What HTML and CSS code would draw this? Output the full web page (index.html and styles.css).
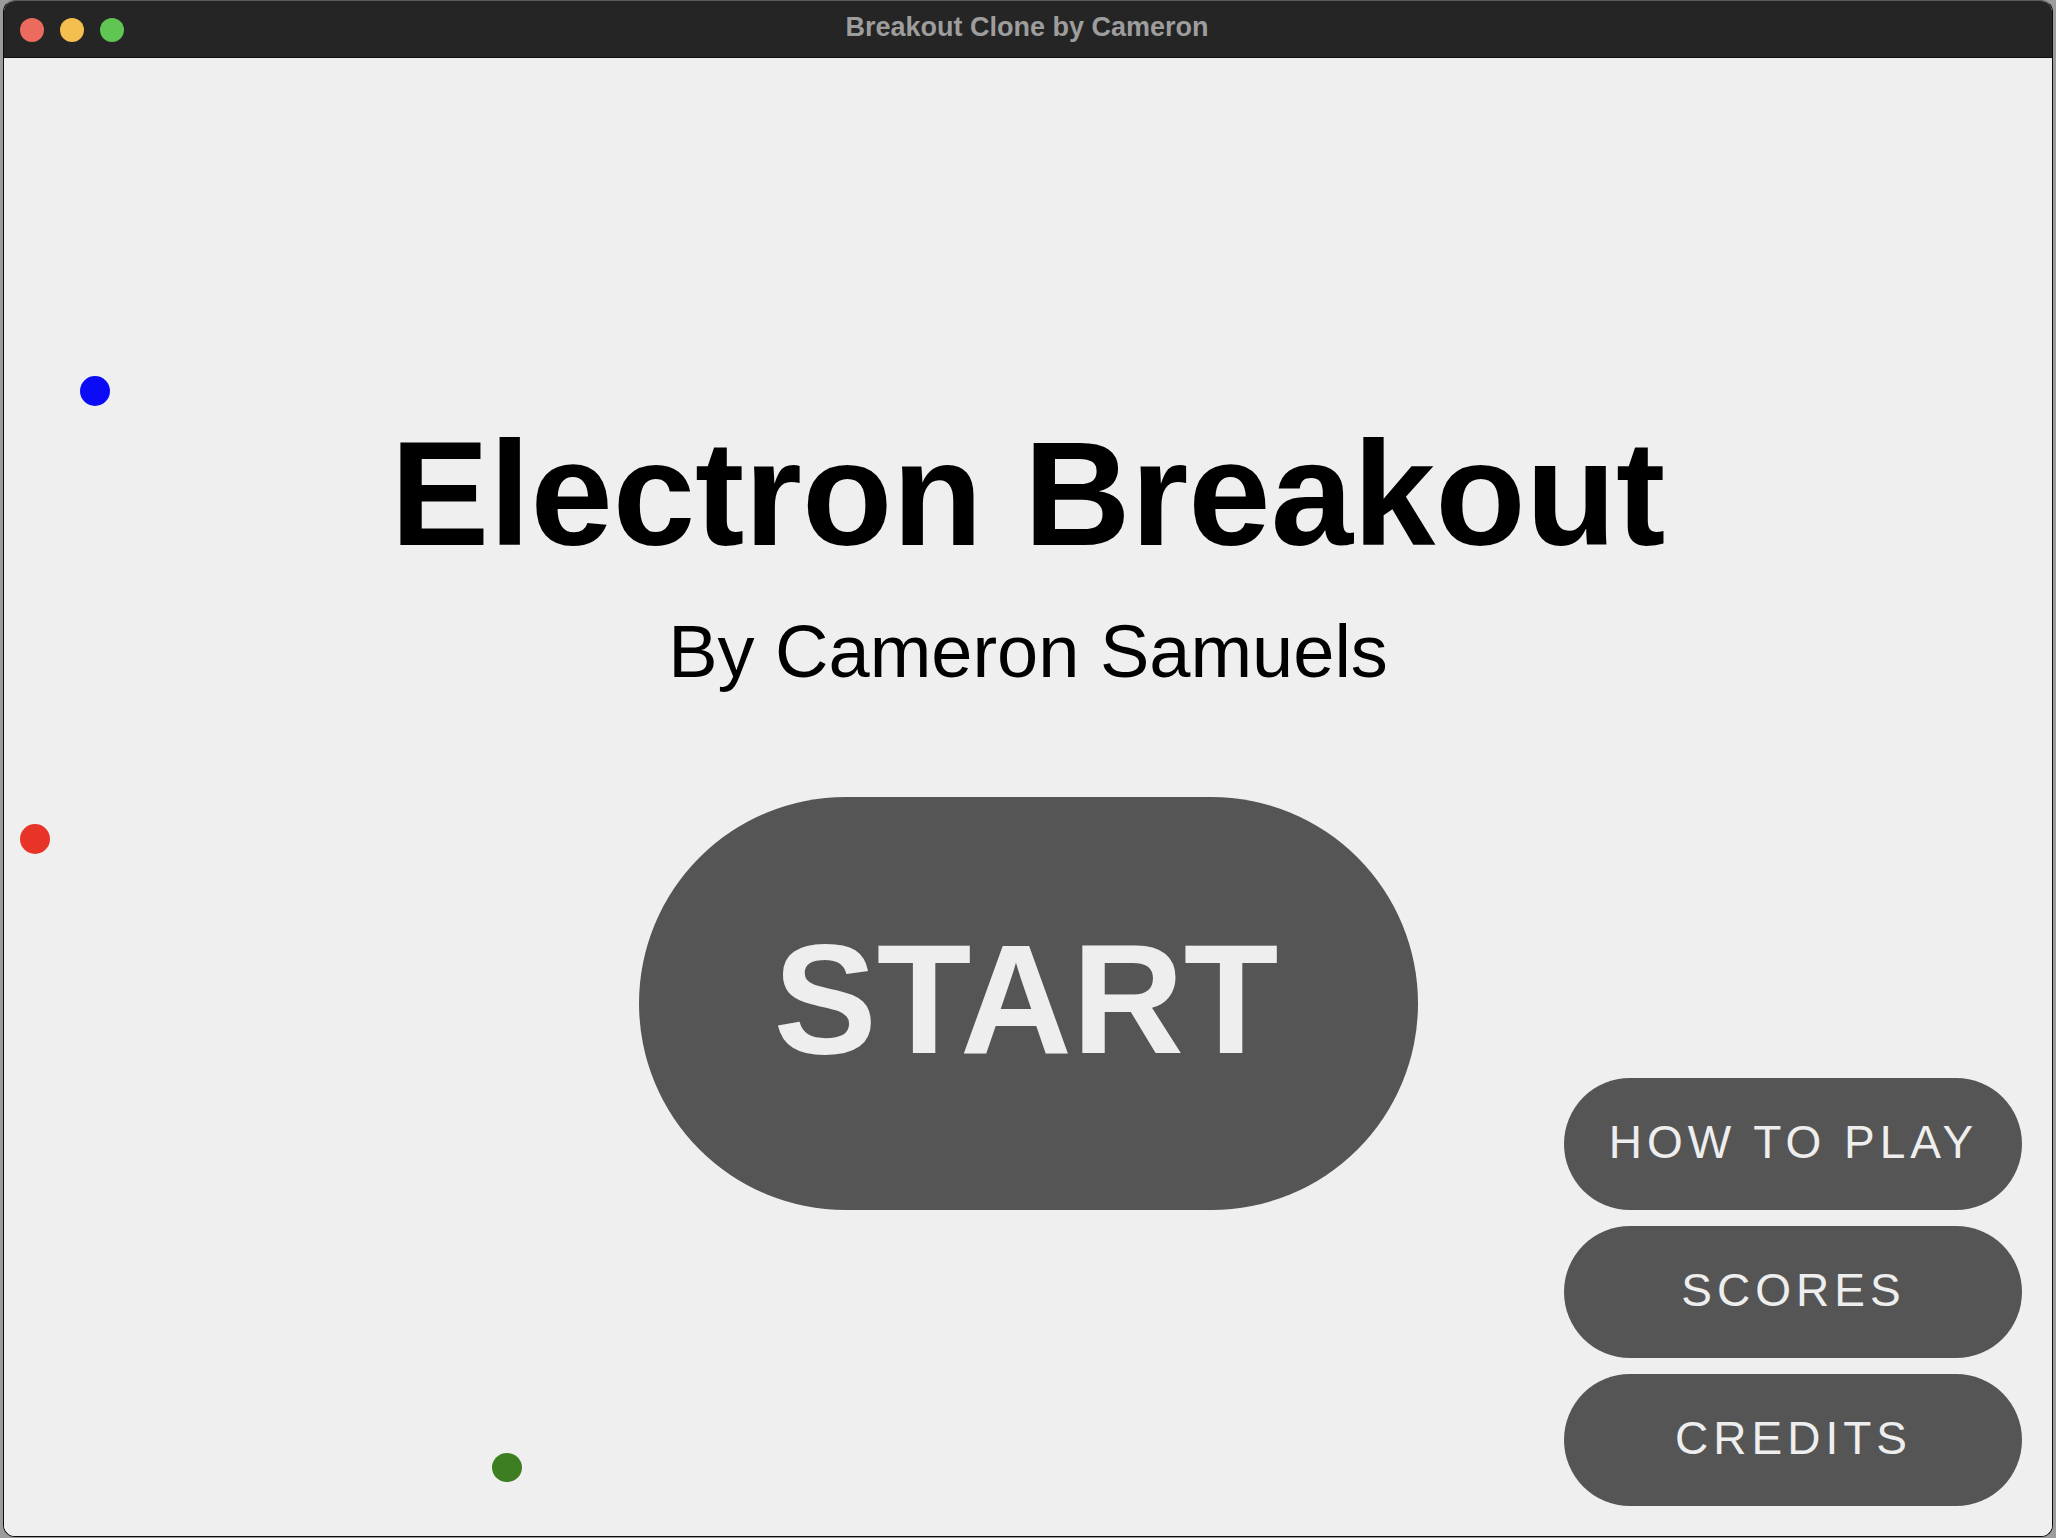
FILE: index.html
```html
<!DOCTYPE html>
<html lang="en">
<head>
<meta charset="utf-8">
<title>Breakout Clone by Cameron</title>
<link rel="stylesheet" href="styles.css">
</head>
<body>
<div class="window">
  <header class="titlebar">
    <div class="lights">
      <span class="light red"></span>
      <span class="light yellow"></span>
      <span class="light green"></span>
    </div>
    <div class="wintitle">Breakout Clone by Cameron</div>
  </header>
  <div class="stage">
    <div class="canvas">
      <span class="ball ball-blue"></span>
      <span class="ball ball-red"></span>
      <span class="ball ball-green"></span>
    </div>
    <main class="hero">
      <h1 class="title">Electron Breakout</h1>
      <p class="byline">By Cameron Samuels</p>
      <button class="start">START</button>
    </main>
    <nav class="menu">
      <button class="menu-btn">HOW TO PLAY</button>
      <button class="menu-btn">SCORES</button>
      <button class="menu-btn">CREDITS</button>
    </nav>
  </div>
</div>
</body>
</html>
```

FILE: styles.css
```css
html, body {
  margin: 0;
  padding: 0;
}
body {
  width: 2056px;
  height: 1538px;
  background: #9c9c9c;
  overflow: hidden;
  font-family: "Liberation Sans", Arial, sans-serif;
}
.window {
  margin-left: 3px;
  width: 2050px;
  height: 1537px;
  box-sizing: border-box;
  border: 1px solid #0c0c0c;
  border-top-color: #5a5a5a;
  border-radius: 12px;
  overflow: hidden;
  display: flex;
  flex-direction: column;
  background: #efefef;
}
.titlebar {
  height: 56px;
  flex: none;
  background: #252525;
  border-bottom: 1px solid #0e0e0e;
  display: grid;
  grid-template-columns: 1fr;
  align-items: center;
}
.lights {
  grid-area: 1 / 1;
  display: flex;
  gap: 16px;
  padding-left: 16px;
  align-items: center;
  margin-top: 1px;
}
.light {
  width: 24px;
  height: 24px;
  border-radius: 50%;
  display: block;
}
.red { background: #ec6a5e; }
.yellow { background: #f4bf4f; }
.green { background: #61c554; }
.wintitle {
  grid-area: 1 / 1;
  justify-self: center;
  color: #9d9d9d;
  font-weight: bold;
  font-size: 27px;
  margin-left: -2px;
  margin-top: -3px;
}
.stage {
  flex: 1;
  display: grid;
  grid-template-columns: 1fr;
  grid-template-rows: 1fr;
  position: relative;
  background: #efefef;
}
.canvas {
  grid-area: 1 / 1;
  position: relative;
}
.ball {
  position: absolute;
  width: 30px;
  height: 30px;
  border-radius: 50%;
}
.ball-blue { left: 76px; top: 318px; background: #0b0cf5; }
.ball-red { left: 16px; top: 766px; background: #e83428; }
.ball-green { left: 488px; top: 1395px; width: 30px; height: 29px; background: #3d7e22; }
.hero {
  grid-area: 1 / 1;
  display: flex;
  flex-direction: column;
  align-items: center;
  padding-top: 362px;
  z-index: 1;
}
.title {
  margin: 0;
  font-size: 148px;
  line-height: 148px;
  font-weight: bold;
  color: #000;
}
.byline {
  margin: 47px 0 0;
  font-size: 74px;
  line-height: 74px;
  color: #000;
}
.start {
  margin-top: 108px;
  width: 779px;
  height: 413px;
  border: none;
  border-radius: 207px;
  background: #555555;
  color: #eeeeee;
  font-family: "Liberation Sans", Arial, sans-serif;
  font-weight: bold;
  font-size: 155px;
  line-height: 1;
  padding: 0;
  display: flex;
  align-items: center;
  justify-content: center;
  padding-bottom: 8px;
  padding-right: 4px;
}
.menu {
  grid-area: 1 / 1;
  align-self: end;
  justify-self: end;
  display: flex;
  flex-direction: column;
  gap: 16px;
  padding: 0 30px 30px 0;
  z-index: 2;
}
.menu-btn {
  width: 458px;
  height: 132px;
  border: none;
  border-radius: 66px;
  background: #555555;
  color: #eeeeee;
  font-family: "Liberation Sans", Arial, sans-serif;
  font-size: 46px;
  letter-spacing: 5px;
  padding: 0 0 4px 1px;
}
```
